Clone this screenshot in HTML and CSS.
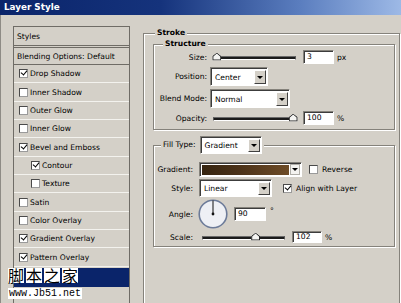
FILE: index.html
```html
<!DOCTYPE html>
<html lang="en">
<head>
    <meta charset="UTF-8" />
    <title>Layer Style</title>
    <link rel="stylesheet" href="styles.css">
</head>
<body>
<div class="window">
    <header class="titlebar">Layer Style</header>

    <div class="dialog">
        <ul class="style-list">
            <li class="head">Styles</li>
            <li class="blend">Blending Options: Default</li>
            <li><span class="cb on"></span>Drop Shadow</li>
            <li><span class="cb"></span>Inner Shadow</li>
            <li><span class="cb"></span>Outer Glow</li>
            <li><span class="cb"></span>Inner Glow</li>
            <li><span class="cb on"></span>Bevel and Emboss</li>
            <li class="sub"><span class="cb on"></span>Contour</li>
            <li class="sub"><span class="cb"></span>Texture</li>
            <li><span class="cb"></span>Satin</li>
            <li><span class="cb"></span>Color Overlay</li>
            <li><span class="cb on"></span>Gradient Overlay</li>
            <li><span class="cb on"></span>Pattern Overlay</li>
            <!-- selected "Stroke" row, its label is covered by the watermark -->
            <li class="selected"></li>
        </ul>

        <div class="settings">
            <fieldset class="group stroke">
                <legend>Stroke</legend>

                <fieldset class="group structure">
                    <legend>Structure</legend>
                    <div class="form-grid">
                        <label>Size:</label>
                        <div class="control">
                            <div class="slider"><div class="track"></div><span class="thumb" style="left:4%"></span></div>
                            <span class="field w31">3</span><span class="unit">px</span>
                        </div>

                        <label>Position:</label>
                        <div class="control">
                            <div class="select w58"><span class="value">Center</span><span class="arrow"></span></div>
                        </div>

                        <label>Blend Mode:</label>
                        <div class="control">
                            <div class="select w80"><span class="value">Normal</span><span class="arrow"></span></div>
                        </div>

                        <label>Opacity:</label>
                        <div class="control">
                            <div class="slider"><div class="track"></div><span class="thumb" style="left:96%"></span></div>
                            <span class="field w31">100</span><span class="unit">%</span>
                        </div>
                    </div>
                </fieldset>

                <fieldset class="group fill">
                    <legend>
                        <span>Fill Type:</span>
                        <span class="select w62 short"><span class="value">Gradient</span><span class="arrow"></span></span>
                    </legend>
                    <div class="form-grid">
                        <label>Gradient:</label>
                        <div class="control">
                            <div class="gradient-pick"><span class="swatch"></span><span class="arrow"></span></div>
                            <span class="check gap-reverse"><span class="cb"></span>Reverse</span>
                        </div>

                        <label>Style:</label>
                        <div class="control">
                            <div class="select w73 short"><span class="value">Linear</span><span class="arrow"></span></div>
                            <span class="check gap-align"><span class="cb on"></span>Align with Layer</span>
                        </div>

                        <label>Angle:</label>
                        <div class="control">
                            <svg class="dial" width="30" height="30" viewBox="0 0 30 30">
                                <circle cx="15" cy="15" r="13.8" fill="#eef0f5" stroke="#6c7b99" stroke-width="1.6"/>
                                <line x1="15" y1="15" x2="15" y2="1.5" stroke="#111" stroke-width="1"/>
                                <circle cx="15" cy="15" r="1.4" fill="#111"/>
                            </svg>
                            <span class="field w32 angle">90</span><span class="unit deg">°</span>
                        </div>

                        <label>Scale:</label>
                        <div class="control">
                            <div class="slider scale"><div class="track"></div><span class="thumb" style="left:64%"></span></div>
                            <span class="field w30 small">102</span><span class="unit">%</span>
                        </div>
                    </div>
                </fieldset>
            </fieldset>
        </div>
    </div>

    <!-- site watermark stamped on the screenshot -->
    <div class="watermark">
        <div class="wm-cn"><span>脚</span><span>本</span><span>之</span><span>家</span></div>
        <div class="wm-url">www.Jb51.net</div>
    </div>
</div>
</body>
</html>
```

FILE: styles.css
```css
:root {
    --face: #d4d0c8;
    --shadow: #85827b;
    --dark: #3c3c3c;
    --select-blue: #0a246a;
}
* { box-sizing: border-box; }
body {
    margin: 0;
    width: 401px;
    height: 303px;
    overflow: hidden;
    background: var(--face);
    font-family: "DejaVu Sans", sans-serif;
    font-size: 7.6px;
    color: #000;
}
.window {
    position: relative;
    height: 303px;
}
.titlebar {
    height: 15px;
    padding-left: 4px;
    line-height: 15px;
    font-size: 8.8px;
    font-weight: bold;
    color: #fff;
    background: linear-gradient(90deg, #0a246a 0%, #15337c 40%, #5b7ebf 75%, #9db9e6 100%);
}
.dialog {
    display: flex;
    gap: 13px;
    height: 288px;
    padding: 11px 0 0 12px;
    border-left: 1px solid #8e8b85;
}

/* left list of effects */
.style-list {
    list-style: none;
    margin: 0;
    padding: 0;
    flex: none;
    width: 117px;
    height: 290px;
    border: 1px solid #6f6c66;
}
.style-list li {
    display: flex;
    align-items: center;
    gap: 2px;
    height: 18.35px;
    padding-left: 5px;
    border-bottom: 1px solid #f3f2ee;
    white-space: nowrap;
}
.style-list li.head {
    height: 21px;
    padding-left: 3px;
    border-bottom: 3px double #6f6c66;
}
.style-list li.blend {
    height: 17px;
    padding-left: 3px;
    border-bottom: 1px solid #6f6c66;
}
.style-list li.sub { padding-left: 17px; }
.style-list li.selected {
    height: 19px;
    margin-top: 1px;
    background: var(--select-blue);
    border-bottom-color: var(--select-blue);
}

.cb {
    position: relative;
    flex: none;
    width: 9px;
    height: 9px;
    background: #fff;
    border: 1px solid #4a4a4a;
    border-right-color: #9a9a9a;
    border-bottom-color: #9a9a9a;
}
.cb.on::after {
    content: "";
    position: absolute;
    left: 1px;
    top: 0;
    width: 5px;
    height: 3px;
    border-left: 1.6px solid #000;
    border-bottom: 1.6px solid #000;
    transform: rotate(-50deg);
}

/* group boxes */
.settings { flex: none; }
.group {
    margin: 0;
    padding: 0;
    min-width: 0;
    border: 1px solid var(--shadow);
    box-shadow: 1px 1px 0 #fff, inset 1px 1px 0 #fff;
}
.group legend {
    padding: 0 2px;
    line-height: 10px;
    font-weight: bold;
    background: var(--face);
}
.stroke {
    width: 257px;
    margin-top: 2px;
    padding: 1px 4px 60px 9px;
}
.stroke > legend { margin-left: 2px; }
.structure { padding: 1px 0 4px 0; }
.structure > legend { margin-left: 9px; }
.fill {
    margin-top: 6px;
    padding: 8px 0 3px 0;
}
.fill > legend {
    display: flex;
    align-items: center;
    gap: 4px;
    margin-left: 7px;
    font-weight: normal;
}

.form-grid {
    display: grid;
    align-items: center;
}
.structure .form-grid {
    grid-template-columns: 53px 1fr;
    grid-template-rows: 14px 19px 19px 14px;
    column-gap: 3px;
    row-gap: 3px;
}
.fill .form-grid {
    grid-template-columns: 39px 1fr;
    grid-template-rows: 15px 18px 30px 12px;
    column-gap: 6px;
    row-gap: 2px;
}
.form-grid label {
    text-align: right;
    white-space: nowrap;
}
.control {
    display: flex;
    align-items: center;
    height: 100%;
    white-space: nowrap;
}

/* sliders */
.slider {
    position: relative;
    flex: none;
    width: 83px;
    height: 9px;
    margin-left: 3px;
    padding-top: 3px;
}
.track {
    height: 4px;
    background: #1b1b1b;
    border-top: 1px solid #6a6a6a;
    border-bottom: 1px solid #fff;
    border-left: 1px solid #555;
    border-right: 1px solid #555;
}
.thumb {
    position: absolute;
    top: 0;
    width: 9px;
    height: 8px;
    margin-left: -4px;
    background: #f4f4f2;
    clip-path: polygon(50% 0, 100% 45%, 100% 100%, 0 100%, 0 45%);
}
.thumb::before {
    content: "";
    position: absolute;
    inset: 0;
    background: #222;
    clip-path: polygon(50% 0, 100% 45%, 100% 100%, 0 100%, 0 45%, 12% 50%, 12% 88%, 88% 88%, 88% 50%, 50% 12%, 12% 50%, 0 45%);
}

/* text fields */
.field {
    flex: none;
    height: 14px;
    line-height: 12px;
    margin-left: 7px;
    padding-left: 3px;
    background: #fff;
    border: 1px solid;
    border-color: var(--shadow) #fff #fff var(--shadow);
    box-shadow: inset 1px 1px 0 var(--dark);
}
.field.small { height: 12px; line-height: 10px; }
.field.angle { margin-left: 6px; }
.w30 { width: 30px; }
.w31 { width: 31px; }
.w32 { width: 32px; }
.unit { margin-left: 3px; }
.unit.deg { margin-left: 4px; align-self: flex-start; margin-top: 7px; }

/* dropdowns */
.select {
    display: flex;
    flex: none;
    height: 19px;
    background: #fff;
    border: 1px solid;
    border-color: var(--shadow) #fff #fff var(--shadow);
    box-shadow: inset 1px 1px 0 var(--dark);
}
.select.short { height: 18px; }
.w58 { width: 58px; }
.w62 { width: 62px; }
.w73 { width: 73px; }
.w80 { width: 80px; }
.select .value {
    flex: 1;
    padding: 1px 0 0 4px;
    display: flex;
    align-items: center;
}
.arrow {
    display: flex;
    align-items: center;
    justify-content: center;
    width: 12px;
    margin: 2px 1px 1px 0;
    background: var(--face);
    border: 1px solid;
    border-color: #fff #404040 #404040 #fff;
}
.arrow::after {
    content: "";
    border-left: 3px solid transparent;
    border-right: 3px solid transparent;
    border-top: 3px solid #000;
}

.gradient-pick {
    display: flex;
    flex: none;
    width: 103px;
    height: 15px;
    border: 1px solid;
    border-color: var(--shadow) #fff #fff var(--shadow);
    box-shadow: inset 1px 1px 0 var(--dark);
    background: #fff;
}
.gradient-pick .swatch {
    flex: 1;
    margin: 2px 1px 1px 2px;
    background: linear-gradient(90deg, #36240f 0%, #4d3319 45%, #6e4c27 100%);
}
.gradient-pick .arrow {
    width: 10px;
    margin: 1px 1px 1px 0;
    background: #f4f3f0;
    border-color: #b0aea8;
}

.check {
    display: flex;
    align-items: center;
    gap: 4px;
}
.gap-reverse { margin-left: 7px; }
.gap-align { margin-left: 11px; }

.dial {
    flex: none;
    margin-left: -1px;
}

/* watermark */
.watermark {
    position: absolute;
    left: 8px;
    top: 268px;
}
.wm-cn {
    display: flex;
    gap: 2px;
    font-family: "Noto Sans CJK SC", sans-serif;
    font-size: 16px;
    line-height: 15px;
}
.wm-cn span { background: #fff; }
.wm-url {
    display: inline-block;
    margin-top: 5px;
    padding: 0 1px;
    background: #fff;
    font-family: "Liberation Mono", monospace;
    font-size: 10px;
    line-height: 11px;
}
```
